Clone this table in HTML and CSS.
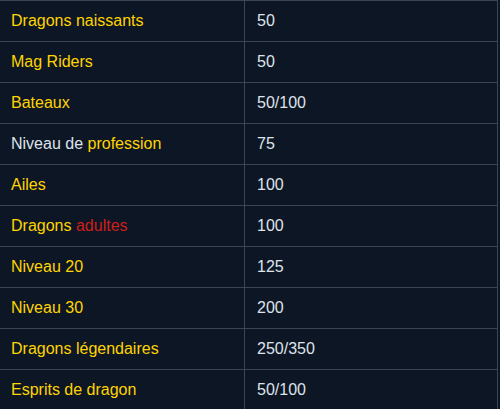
FILE: index.html
```html
<!DOCTYPE html>
<html lang="fr">
<head>
<meta charset="utf-8">
<link rel="stylesheet" href="styles.css">
</head>
<body>
<table class="levels">
  <tbody>
    <tr><td class="name"><span class="gold">Dragons naissants</span></td><td class="val">50</td></tr>
    <tr><td class="name"><span class="gold">Mag Riders</span></td><td class="val">50</td></tr>
    <tr><td class="name"><span class="gold">Bateaux</span></td><td class="val">50/100</td></tr>
    <tr><td class="name">Niveau de <span class="gold">profession</span></td><td class="val">75</td></tr>
    <tr><td class="name"><span class="gold">Ailes</span></td><td class="val">100</td></tr>
    <tr><td class="name"><span class="gold">Dragons</span> <span class="red">adultes</span></td><td class="val">100</td></tr>
    <tr><td class="name"><span class="gold">Niveau 20</span></td><td class="val">125</td></tr>
    <tr><td class="name"><span class="gold">Niveau 30</span></td><td class="val">200</td></tr>
    <tr><td class="name"><span class="gold">Dragons légendaires</span></td><td class="val">250/350</td></tr>
    <tr><td class="name"><span class="gold">Esprits de dragon</span></td><td class="val">50/100</td></tr>
  </tbody>
</table>
</body>
</html>
```

FILE: styles.css
```css
html, body {
  margin: 0;
  padding: 0;
  background: #0d1624;
}
body {
  font-family: "Liberation Sans", Arial, sans-serif;
  font-size: 16px;
  color: #dfe3ea;
}
.levels {
  border-collapse: collapse;
  width: 498px;
  table-layout: fixed;
}
.levels td {
  border-top: 1px solid #3b4554;
  border-bottom: 1px solid #3b4554;
  padding: 10px 11px;
  height: 20px;
  line-height: 20px;
  vertical-align: middle;
}
.levels td.name {
  width: 222px;
  border-right: 1px solid #3b4554;
}
.levels td.val {
  padding-left: 12px;
  border-right: 1px solid #3b4554;
}
.gold { color: #ffd400; }
.red { color: #cc1f1a; }
```
